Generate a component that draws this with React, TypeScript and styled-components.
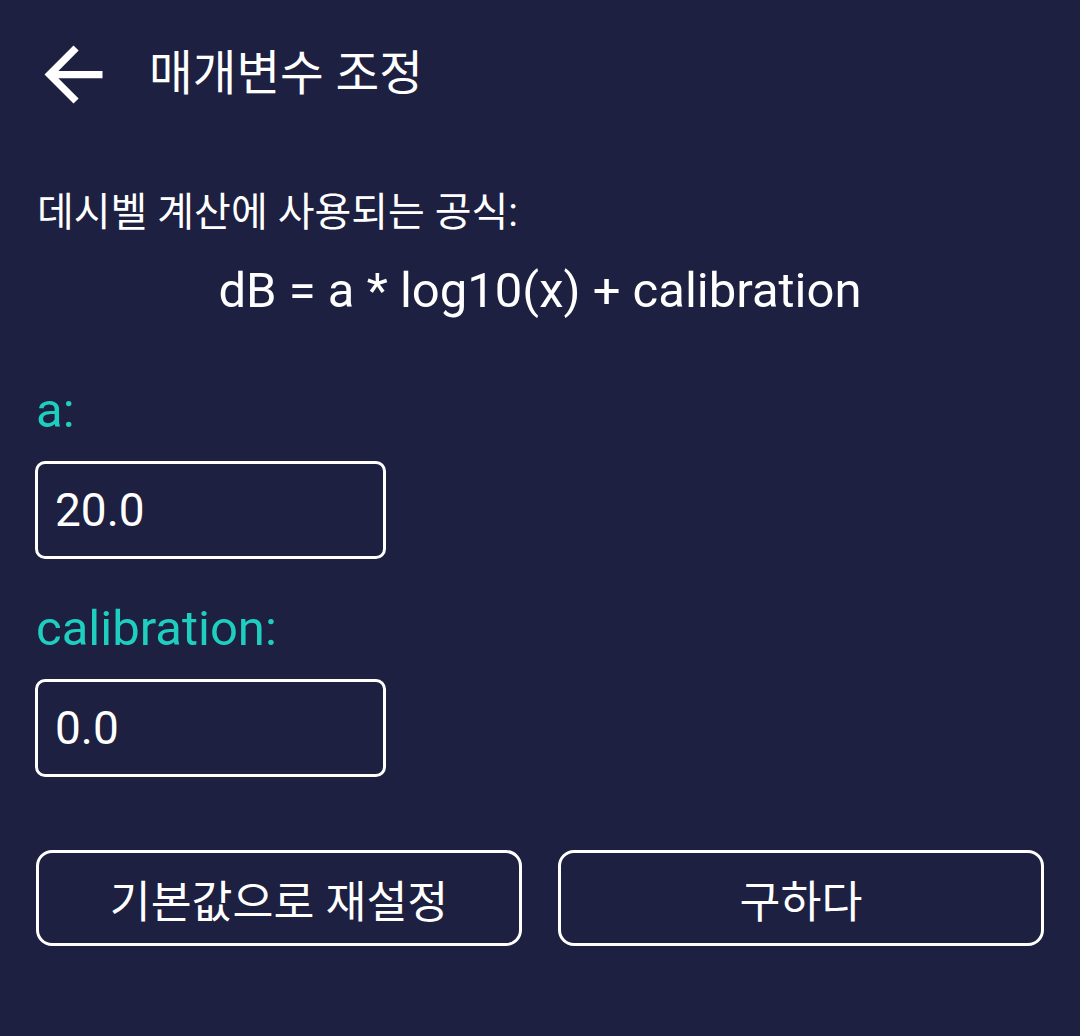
import React from "react";
import styled, { createGlobalStyle } from "styled-components";

const GlobalStyle = createGlobalStyle`
  html, body {
    margin: 0;
    padding: 0;
    background: #1d2040;
  }
  body {
    font-family: Roboto, "Noto Sans CJK KR", sans-serif;
    color: #ffffff;
  }
  * { box-sizing: border-box; }
`;

const Page = styled.div`
  width: 1080px;
  min-height: 1036px;
  background: #1d2040;
  display: flex;
  flex-direction: column;
`;

const Header = styled.header`
  height: 148px;
  display: flex;
  align-items: center;
  padding-left: 30px;
  gap: 32px;
`;

const BackButton = styled.button`
  width: 87px;
  height: 87px;
  padding: 0;
  border: none;
  background: transparent;
  display: flex;
  align-items: center;
  justify-content: center;
  cursor: pointer;
`;

const Title = styled.h1`
  margin: 0;
  font-family: Roboto, "Noto Sans CJK KR", sans-serif;
  font-size: 47.5px;
  font-weight: 400;
  line-height: 58px;
  color: #ffffff;
`;

const Content = styled.main`
  padding: 0 36px;
  display: flex;
  flex-direction: column;
`;

const Description = styled.p`
  margin: 41px 0 0 1px;
  font-size: 40px;
  line-height: 48px;
  color: #ffffff;
`;

const Formula = styled.p`
  margin: 25px 0 0;
  font-size: 49px;
  line-height: 58px;
  text-align: center;
  color: #ffffff;
`;

const Label = styled.label<{ $gap: number }>`
  display: block;
  margin-top: ${(p) => p.$gap}px;
  font-size: 49px;
  line-height: 58px;
  color: #1ecfbf;
`;

const Field = styled.input`
  display: block;
  margin-top: 21px;
  margin-left: -1px;
  width: 351px;
  height: 98px;
  padding: 0 0 0 17px;
  border: 3px solid #ffffff;
  border-radius: 10px;
  background: transparent;
  color: #ffffff;
  font-family: Roboto, "Noto Sans CJK KR", sans-serif;
  font-size: 46px;
  outline: none;
`;

const ButtonRow = styled.div`
  margin-top: 73px;
  display: flex;
  gap: 36px;
`;

const ActionButton = styled.button`
  flex: 1;
  height: 96px;
  border: 3px solid #ffffff;
  border-radius: 16px;
  background: transparent;
  color: #ffffff;
  font-family: Roboto, "Noto Sans CJK KR", sans-serif;
  font-size: 44.5px;
  font-weight: 400;
  cursor: pointer;
  display: flex;
  align-items: center;
  justify-content: center;
`;

const BackArrow = () => (
  <svg width="87" height="87" viewBox="0 0 24 24" fill="#ffffff">
    <path d="M20 11H7.83l5.59-5.59L12 4l-8 8 8 8 1.41-1.41L7.83 13H20v-2z" />
  </svg>
);

export default function App() {
  return (
    <>
      <GlobalStyle />
      <Page>
        <Header>
          <BackButton aria-label="back">
            <BackArrow />
          </BackButton>
          <Title>매개변수 조정</Title>
        </Header>
        <Content>
          <Description>데시벨 계산에 사용되는 공식:</Description>
          <Formula>dB = a * log10(x) + calibration</Formula>
          <Label $gap={62} htmlFor="a">a:</Label>
          <Field id="a" defaultValue="20.0" />
          <Label $gap={41} htmlFor="cal">calibration:</Label>
          <Field id="cal" defaultValue="0.0" />
          <ButtonRow>
            <ActionButton>기본값으로 재설정</ActionButton>
            <ActionButton>구하다</ActionButton>
          </ButtonRow>
        </Content>
      </Page>
    </>
  );
}
